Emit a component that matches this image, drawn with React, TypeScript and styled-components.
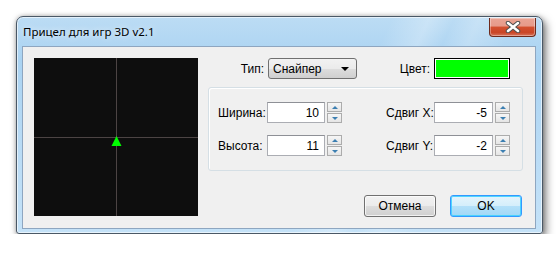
import React from 'react'
import styled, { createGlobalStyle } from 'styled-components'

const GlobalStyle = createGlobalStyle`
  html, body {
    margin: 0;
    padding: 0;
    background: #ffffff;
  }
  body {
    font-family: 'Liberation Sans', Arial, sans-serif;
    font-size: 12px;
    color: #000;
    white-space: nowrap;
  }
`

const Page = styled.div`
  padding: 16px 0 0 16px;
`

const Window = styled.div`
  box-sizing: border-box;
  width: 527px;
  height: 218px;
  border: 1px solid #4a5866;
  border-radius: 7px 7px 3px 3px;
  padding: 0 6px 4px 5px;
  display: flex;
  flex-direction: column;
  background: linear-gradient(
      115deg,
      rgba(255, 255, 255, 0) 60%,
      rgba(255, 255, 255, 0.25) 66%,
      rgba(255, 255, 255, 0) 70%,
      rgba(255, 255, 255, 0.2) 74%,
      rgba(255, 255, 255, 0) 80%
    ),
    linear-gradient(180deg, #bcdcf4 0%, #aad3f2 20%, #b9dbf5 60%, #c4e2f8 100%);
  box-shadow: inset 0 0 0 1px rgba(255, 255, 255, 0.6),
    3px 4px 8px rgba(0, 0, 0, 0.5), 0 0 4px rgba(0, 0, 0, 0.25);
`

const TitleBar = styled.div`
  height: 29px;
  display: flex;
  justify-content: space-between;
  align-items: flex-start;
  flex: none;
`

const Title = styled.div`
  font-family: 'Noto Sans', 'DejaVu Sans', sans-serif;
  font-size: 11.5px;
  padding: 7px 0 0 1px;
  color: #000;
  text-shadow: 0 0 6px rgba(255, 255, 255, 0.9);
`

const CloseButton = styled.div`
  box-sizing: border-box;
  width: 47px;
  height: 19px;
  margin-top: 1px;
  border: 1px solid #6e2a1c;
  border-top: none;
  border-radius: 0 0 4px 4px;
  background: linear-gradient(
    180deg,
    #eaa494 0%,
    #e79a89 45%,
    #d4502f 50%,
    #c94526 80%,
    #d7735a 100%
  );
  box-shadow: inset 0 0 0 1px rgba(255, 255, 255, 0.35);
  display: flex;
  align-items: center;
  justify-content: center;
`

const Client = styled.div`
  box-sizing: border-box;
  height: 183px;
  border: 1px solid #8ea6c0;
  background: #f0f0f0;
  padding: 11px 0 0 11px;
  display: flex;
`

const Canvas = styled.div`
  width: 164px;
  height: 158px;
  background: #0e0e0e;
  flex: none;
`

const Side = styled.div`
  width: 315px;
  margin-left: 10px;
  display: flex;
  flex-direction: column;
`

const TopRow = styled.div`
  display: flex;
  height: 21px;
`

const TopCell = styled.div<{ $w: number }>`
  width: ${p => p.$w}px;
  display: flex;
  justify-content: flex-end;
  align-items: center;
  gap: 4px;
`

const Select = styled.div`
  box-sizing: border-box;
  width: 89px;
  height: 21px;
  border: 1px solid #707070;
  border-radius: 3px;
  background: linear-gradient(180deg, #f2f2f2 0%, #ebebeb 50%, #dddddd 51%, #cfcfcf 100%);
  display: flex;
  align-items: center;
  justify-content: space-between;
  padding: 0 7px 0 4px;
`

const Arrow = styled.span`
  width: 0;
  height: 0;
  border-left: 4px solid transparent;
  border-right: 4px solid transparent;
  border-top: 4px solid #000;
`

const ColorBox = styled.div`
  box-sizing: border-box;
  width: 76px;
  height: 21px;
  border: 1px solid #000;
  box-shadow: inset 0 0 0 1px #fff;
  background: #00ff00;
`

const Group = styled.div`
  box-sizing: border-box;
  margin-top: 8px;
  height: 84px;
  border: 1px solid #d5dfe5;
  border-radius: 3px;
  box-shadow: inset 1px 1px 0 #fff;
  padding: 14px 0 0 9px;
  display: grid;
  grid-template-columns: 124px 124px;
  column-gap: 44px;
  row-gap: 12px;
  align-content: start;
`

const Field = styled.div`
  display: flex;
  align-items: center;
  height: 21px;
`

const Label = styled.span<{ $w: number }>`
  width: ${p => p.$w}px;
  flex: none;
`

const Input = styled.div<{ $w: number }>`
  box-sizing: border-box;
  width: ${p => p.$w}px;
  height: 21px;
  border: 1px solid #abadb3;
  border-top-color: #8e9096;
  background: #fff;
  text-align: right;
  padding: 3px 5px 0 0;
  margin-right: 2px;
`

const Spin = styled.div`
  display: flex;
  flex-direction: column;
  gap: 1px;
  height: 21px;
`

const SpinButton = styled.div<{ $down?: boolean }>`
  box-sizing: border-box;
  width: 15px;
  height: 10px;
  border: 1px solid #acacac;
  background: linear-gradient(180deg, #f6f6f6 0%, #e5e5e5 100%);
  display: flex;
  align-items: center;
  justify-content: center;
  &::after {
    content: '';
    width: 0;
    height: 0;
    border-left: 3px solid transparent;
    border-right: 3px solid transparent;
    ${p =>
      p.$down
        ? 'border-top: 3px solid #3c7fb1;'
        : 'border-bottom: 3px solid #3c7fb1;'}
  }
`

const Buttons = styled.div`
  margin-top: 24px;
  display: flex;
  justify-content: flex-end;
  gap: 14px;
  padding-right: 1px;
`

const Button = styled.div<{ $default?: boolean }>`
  box-sizing: border-box;
  width: 72px;
  height: 22px;
  border-radius: 3px;
  display: flex;
  align-items: center;
  justify-content: center;
  border: 1px solid ${p => (p.$default ? '#3399ff' : '#707070')};
  background: ${p =>
    p.$default
      ? 'linear-gradient(180deg, #e5f4fc 0%, #d4eefb 50%, #b3e0f9 51%, #a1d8f6 100%)'
      : 'linear-gradient(180deg, #f2f2f2 0%, #ebebeb 50%, #dddddd 51%, #cfcfcf 100%)'};
  box-shadow: inset 0 0 0 1px
    ${p => (p.$default ? 'rgba(64, 210, 255, 0.9)' : 'rgba(255, 255, 255, 0.7)')};
`

const NumberField = ({ label, value, lw, iw }: { label: string; value: string; lw: number; iw: number }) => (
  <Field>
    <Label $w={lw}>{label}</Label>
    <Input $w={iw}>{value}</Input>
    <Spin>
      <SpinButton />
      <SpinButton $down />
    </Spin>
  </Field>
)

const App = () => (
  <Page>
    <GlobalStyle />
    <Window>
      <TitleBar>
        <Title>Прицел для игр 3D v2.1</Title>
        <CloseButton>
          <svg width="16" height="12" viewBox="0 0 16 12">
            <path d="M3 2 L13 10 M13 2 L3 10" stroke="#505050" strokeWidth="4.5" strokeLinecap="round" />
            <path d="M3 2 L13 10 M13 2 L3 10" stroke="#ffffff" strokeWidth="2.5" strokeLinecap="round" />
          </svg>
        </CloseButton>
      </TitleBar>
      <Client>
        <Canvas>
          <svg width="164" height="158" viewBox="0 0 164 158">
            <rect x="82" y="0" width="1" height="158" fill="#4c4444" />
            <rect x="0" y="79" width="164" height="1" fill="#4c4444" />
            <polygon points="82.5,78 87.5,88 77.5,88" fill="#00ff00" />
          </svg>
        </Canvas>
        <Side>
          <TopRow>
            <TopCell $w={149}>
              <span>Тип:</span>
              <Select>
                <span>Снайпер</span>
                <Arrow />
              </Select>
            </TopCell>
            <TopCell $w={153}>
              <span>Цвет:</span>
              <ColorBox />
            </TopCell>
          </TopRow>
          <Group>
            <NumberField label="Ширина:" value="10" lw={49} iw={58} />
            <NumberField label="Сдвиг X:" value="-5" lw={48} iw={59} />
            <NumberField label="Высота:" value="11" lw={49} iw={58} />
            <NumberField label="Сдвиг Y:" value="-2" lw={48} iw={59} />
          </Group>
          <Buttons>
            <Button>Отмена</Button>
            <Button $default>OK</Button>
          </Buttons>
        </Side>
      </Client>
    </Window>
  </Page>
)

export default App
